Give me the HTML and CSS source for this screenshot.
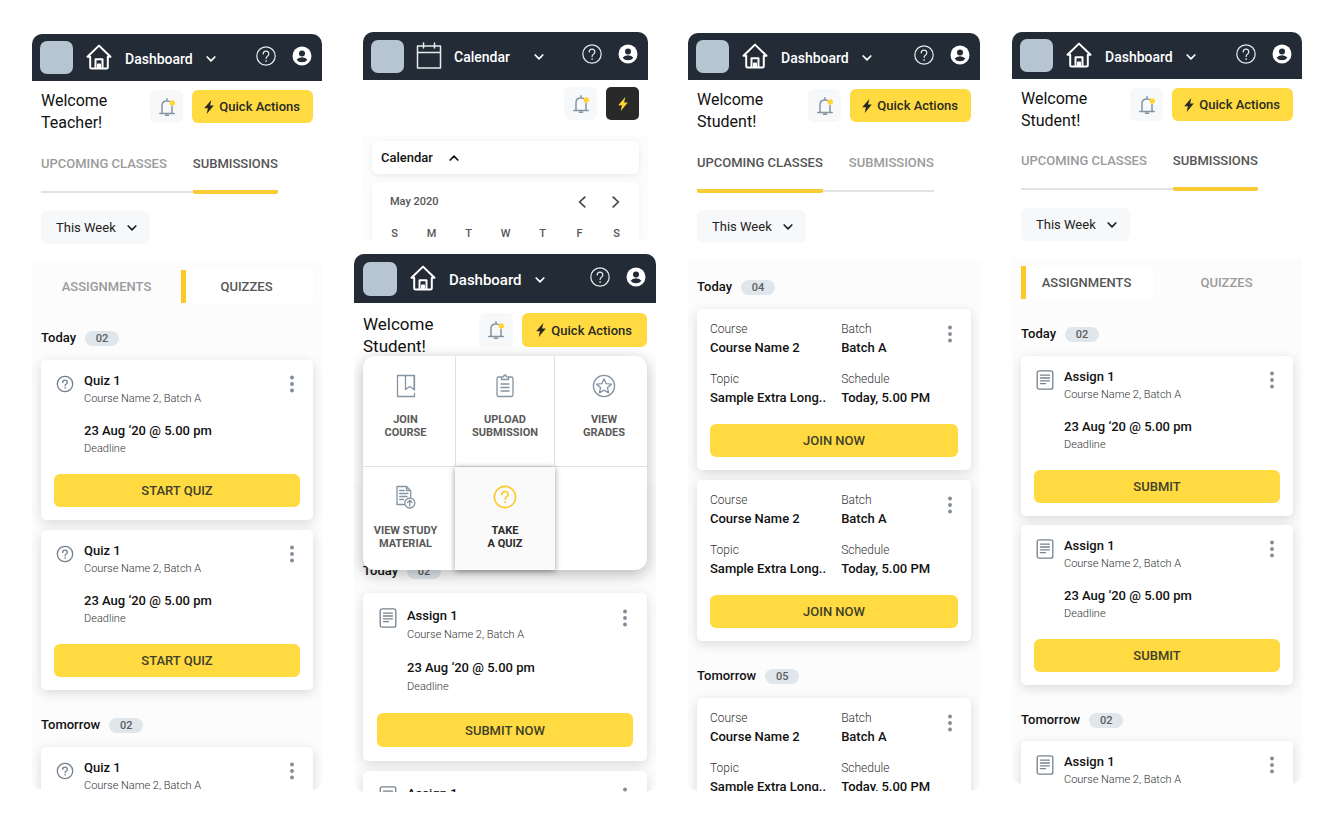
FILE: index.html
```html
<!DOCTYPE html>
<html lang="en">
<head>
<meta charset="utf-8">
<meta name="viewport" content="width=device-width, initial-scale=1">
<title>Classroom dashboard</title>
<link rel="stylesheet" href="styles.css">
</head>
<body>
<svg class="sprite" aria-hidden="true">
  <symbol id="home" viewBox="0 0 26 26"><path d="M1.500 12.800 13 1.600l11.500 11.200h-2.700V23q0 1.500-1.500 1.500H5.700q-1.500 0-1.500-1.500V12.800z M9.500 24.300v-9h7v9M12 24v-3.500h2V24"/></symbol>
  <symbol id="cal" viewBox="0 0 26 28"><path d="M1.500 4h23v22h-23zM1.500 10.500h23M7.500 1v5M18.500 1v5"/></symbol>
  <symbol id="help" viewBox="0 0 20 20"><circle cx="10" cy="10" r="9.200"/><path d="M7.200 8q0-2.900 2.800-2.900T12.800 8q0 1.300-1.400 2.200-1.300.8-1.300 2.200M10.100 14.600v.8"/></symbol>
  <symbol id="user" viewBox="0 0 20 20"><circle cx="10" cy="10" r="9.500" fill="#fff"/><circle cx="10" cy="7.400" r="3" fill="#222b36"/><path d="M4.600 13.700q1.600-2.500 5.400-2.500t5.400 2.500q-1.900 2.600-5.400 2.600t-5.400-2.600z" fill="#222b36"/></symbol>
  <symbol id="down" viewBox="0 0 10 10"><path d="m1.200 3 3.800 3.800L8.800 3"/></symbol>
  <symbol id="up" viewBox="0 0 10 10"><path d="m1.200 7 3.800-3.800L8.800 7"/></symbol>
  <symbol id="bell" viewBox="0 0 16 18"><path d="M.8 15.600h14.400M3 15.600V7.500Q3 3 8 3q1.300 0 2.300.4M13 8.500v7.100M8 3V.8M6.500 17.300h3" fill="none" stroke="#8594a1" stroke-width="1.500"/><circle cx="13.300" cy="5" r="2.700" fill="#ffd631"/></symbol>
  <symbol id="bolt" viewBox="0 0 10 14"><path d="M7.300 0 .2 8.200h3.700L2.700 14l7.100-8.600H6.100z" fill="currentColor"/></symbol>
  <symbol id="dots" viewBox="0 0 16 18"><g fill="#7f8b96"><circle cx="8" cy="2.500" r="1.900"/><circle cx="8" cy="9" r="1.900"/><circle cx="8" cy="15.500" r="1.900"/></g></symbol>
  <symbol id="quiz" viewBox="0 0 18 20"><circle cx="9" cy="10" r="7.700"/><path d="M6.700 8.400q0-2.200 2.300-2.200t2.300 2.200q0 .9-1.100 1.600-1.100.6-1.100 1.600M9.100 13.500v.6"/></symbol>
  <symbol id="sheet" viewBox="0 0 18 20"><rect x="1.200" y=".8" width="15.600" height="18.400" rx="2"/><path d="M4.500 5.200h9M4.500 8h9M4.500 10.800h9M4.500 13.600h5"/></symbol>
  <symbol id="book" viewBox="0 0 24 24"><path d="M20.500 16V1.500h-17v21h17v-3.200M11.500 1.500v14l4.300-3 4.300 3v-14"/></symbol>
  <symbol id="clip" viewBox="0 0 24 24"><path d="M8.500 3H5.800Q4 3 4 4.800v15.900q0 1.800 1.800 1.800h12.400q1.800 0 1.800-1.800V4.800Q20 3 18.200 3h-2.700M8.500 5.500V2.800h2.200Q10.700 1 12 1t1.300 1.800h2.200v2.700zM8 10h8M8 13.500h8M8 17h8"/></symbol>
  <symbol id="star" viewBox="0 0 24 24"><circle cx="12" cy="12" r="10.600"/><path d="m12 4.800 2.100 4.900 5.300.5-4 3.500 1.200 5.200-4.600-2.800-4.600 2.800 1.200-5.200-4-3.500 5.300-.5z"/></symbol>
  <symbol id="material" viewBox="0 0 24 24"><path d="M10.500 19.500H3V1.500h9.500l4.200 4.200V12M12.500 1.500v4.200h4.200M5.700 8.500H14M5.700 5.500h4.500M5.700 11.500H13M5.700 14.500H9.500"/><circle cx="15.800" cy="18" r="5"/><path d="M15.800 21v-5.600M13.600 17.500l2.200-2.200 2.200 2.200"/></symbol>
  <symbol id="quizbig" viewBox="0 0 24 24"><circle cx="12" cy="12" r="10.600"/><path d="M8.900 9.700q0-3.200 3.100-3.200t3.100 3.200q0 1.400-1.600 2.300-1.400.8-1.400 2.300M12.100 16.700v.9"/></symbol>
  <symbol id="prev" viewBox="0 0 10 12"><path d="M7.800 1.200 2.600 6l5.200 4.800"/></symbol>
  <symbol id="next" viewBox="0 0 10 12"><path d="M2.200 1.200 7.400 6l-5.200 4.800"/></symbol>
</svg>

<main class="board">

  <section class="phone teacher">
    <header class="nav">
      <span class="logo"></span>
      <button class="place"><svg class="home"><use href="#home"/></svg><span>Dashboard</span><svg class="chev"><use href="#down"/></svg></button>
      <div class="account">
        <button aria-label="Help"><svg class="round"><use href="#help"/></svg></button>
        <button aria-label="Account"><svg class="round"><use href="#user"/></svg></button>
      </div>
    </header>
    <div class="hero">
      <h1>Welcome Teacher!</h1>
      <button class="bell" aria-label="Notifications"><svg><use href="#bell"/></svg></button>
      <button class="quick"><svg class="bolt"><use href="#bolt"/></svg>Quick Actions</button>
    </div>
    <nav class="tabs"><a href="#upcoming">UPCOMING CLASSES</a><a class="on" href="#submissions">SUBMISSIONS</a></nav>
    <div class="period"><select aria-label="Period"><option>This Week</option></select><svg class="chev"><use href="#down"/></svg></div>
    <div class="feed">
      <nav class="kinds"><a href="#assignments">ASSIGNMENTS</a><a class="on" href="#quizzes">QUIZZES</a></nav>
      <h2>Today <span class="count">02</span></h2>
      <article class="card">
        <div class="task"><svg class="kind"><use href="#quiz"/></svg>
          <div class="info"><h3>Quiz 1</h3><p>Course Name 2, Batch A</p><h3 class="due">23 Aug ‘20 @ 5.00 pm</h3><p>Deadline</p></div>
          <button class="more" aria-label="More"><svg><use href="#dots"/></svg></button></div>
        <button class="main">START QUIZ</button>
      </article>
      <article class="card">
        <div class="task"><svg class="kind"><use href="#quiz"/></svg>
          <div class="info"><h3>Quiz 1</h3><p>Course Name 2, Batch A</p><h3 class="due">23 Aug ‘20 @ 5.00 pm</h3><p>Deadline</p></div>
          <button class="more" aria-label="More"><svg><use href="#dots"/></svg></button></div>
        <button class="main">START QUIZ</button>
      </article>
      <h2>Tomorrow <span class="count">02</span></h2>
      <article class="card">
        <div class="task"><svg class="kind"><use href="#quiz"/></svg>
          <div class="info"><h3>Quiz 1</h3><p>Course Name 2, Batch A</p></div>
          <button class="more" aria-label="More"><svg><use href="#dots"/></svg></button></div>
      </article>
    </div>
  </section>

  <div class="stack">
    <section class="phone small">
      <header class="nav">
        <span class="logo"></span>
        <button class="place"><svg class="cal"><use href="#cal"/></svg><span>Calendar</span><svg class="chev"><use href="#down"/></svg></button>
        <div class="account">
          <button aria-label="Help"><svg class="round"><use href="#help"/></svg></button>
          <button aria-label="Account"><svg class="round"><use href="#user"/></svg></button>
        </div>
      </header>
      <div class="hero">
        <button class="bell" aria-label="Notifications"><svg><use href="#bell"/></svg></button>
        <button class="flash" aria-label="Quick Actions"><svg class="bolt"><use href="#bolt"/></svg></button>
      </div>
      <div class="feed">
        <button class="fold">Calendar<svg class="chev"><use href="#up"/></svg></button>
        <div class="month">
          <div class="monthbar"><span>May 2020</span><button aria-label="Previous month"><svg><use href="#prev"/></svg></button><button aria-label="Next month"><svg><use href="#next"/></svg></button></div>
          <table><thead><tr><th>S</th><th>M</th><th>T</th><th>W</th><th>T</th><th>F</th><th>S</th></tr></thead></table>
        </div>
      </div>
    </section>

    <section class="phone large">
      <header class="nav">
        <span class="logo"></span>
        <button class="place"><svg class="home"><use href="#home"/></svg><span>Dashboard</span><svg class="chev"><use href="#down"/></svg></button>
        <div class="account">
          <button aria-label="Help"><svg class="round"><use href="#help"/></svg></button>
          <button aria-label="Account"><svg class="round"><use href="#user"/></svg></button>
        </div>
      </header>
      <div class="hero">
        <h1>Welcome Student!</h1>
        <button class="bell" aria-label="Notifications"><svg><use href="#bell"/></svg></button>
        <button class="quick"><svg class="bolt"><use href="#bolt"/></svg>Quick Actions</button>
        <div class="menu">
          <button><svg><use href="#book"/></svg><span>JOIN<br>COURSE</span></button>
          <button><svg><use href="#clip"/></svg><span>UPLOAD<br>SUBMISSION</span></button>
          <button><svg><use href="#star"/></svg><span>VIEW<br>GRADES</span></button>
          <button><svg><use href="#material"/></svg><span>VIEW STUDY<br>MATERIAL</span></button>
          <button class="on"><svg><use href="#quizbig"/></svg><span>TAKE<br>A QUIZ</span></button>
        </div>
      </div>
      <div class="feed">
        <h2>Today <span class="count">02</span></h2>
        <article class="card">
          <div class="task"><svg class="kind"><use href="#sheet"/></svg>
            <div class="info"><h3>Assign 1</h3><p>Course Name 2, Batch A</p><h3 class="due">23 Aug ‘20 @ 5.00 pm</h3><p>Deadline</p></div>
            <button class="more" aria-label="More"><svg><use href="#dots"/></svg></button></div>
          <button class="main">SUBMIT NOW</button>
        </article>
        <article class="card">
          <div class="task"><svg class="kind"><use href="#sheet"/></svg>
            <div class="info"><h3>Assign 1</h3></div>
            <button class="more" aria-label="More"><svg><use href="#dots"/></svg></button></div>
        </article>
      </div>
    </section>
  </div>

  <section class="phone classes">
    <header class="nav">
      <span class="logo"></span>
      <button class="place"><svg class="home"><use href="#home"/></svg><span>Dashboard</span><svg class="chev"><use href="#down"/></svg></button>
      <div class="account">
        <button aria-label="Help"><svg class="round"><use href="#help"/></svg></button>
        <button aria-label="Account"><svg class="round"><use href="#user"/></svg></button>
      </div>
    </header>
    <div class="hero">
      <h1>Welcome Student!</h1>
      <button class="bell" aria-label="Notifications"><svg><use href="#bell"/></svg></button>
      <button class="quick"><svg class="bolt"><use href="#bolt"/></svg>Quick Actions</button>
    </div>
    <nav class="tabs"><a class="on" href="#upcoming">UPCOMING CLASSES</a><a href="#submissions">SUBMISSIONS</a></nav>
    <div class="period"><select aria-label="Period"><option>This Week</option></select><svg class="chev"><use href="#down"/></svg></div>
    <div class="feed">
      <h2>Today <span class="count">04</span></h2>
      <article class="card">
        <dl class="facts">
          <div><dt>Course</dt><dd>Course Name 2</dd></div><div><dt>Batch</dt><dd>Batch A</dd></div>
          <button class="more" aria-label="More"><svg><use href="#dots"/></svg></button>
          <div><dt>Topic</dt><dd>Sample Extra Long..</dd></div><div><dt>Schedule</dt><dd>Today, 5.00 PM</dd></div>
        </dl>
        <button class="main">JOIN NOW</button>
      </article>
      <article class="card">
        <dl class="facts">
          <div><dt>Course</dt><dd>Course Name 2</dd></div><div><dt>Batch</dt><dd>Batch A</dd></div>
          <button class="more" aria-label="More"><svg><use href="#dots"/></svg></button>
          <div><dt>Topic</dt><dd>Sample Extra Long..</dd></div><div><dt>Schedule</dt><dd>Today, 5.00 PM</dd></div>
        </dl>
        <button class="main">JOIN NOW</button>
      </article>
      <h2>Tomorrow <span class="count">05</span></h2>
      <article class="card">
        <dl class="facts">
          <div><dt>Course</dt><dd>Course Name 2</dd></div><div><dt>Batch</dt><dd>Batch A</dd></div>
          <button class="more" aria-label="More"><svg><use href="#dots"/></svg></button>
          <div><dt>Topic</dt><dd>Sample Extra Long..</dd></div><div><dt>Schedule</dt><dd>Today, 5.00 PM</dd></div>
        </dl>
      </article>
    </div>
  </section>

  <section class="phone student">
    <header class="nav">
      <span class="logo"></span>
      <button class="place"><svg class="home"><use href="#home"/></svg><span>Dashboard</span><svg class="chev"><use href="#down"/></svg></button>
      <div class="account">
        <button aria-label="Help"><svg class="round"><use href="#help"/></svg></button>
        <button aria-label="Account"><svg class="round"><use href="#user"/></svg></button>
      </div>
    </header>
    <div class="hero">
      <h1>Welcome Student!</h1>
      <button class="bell" aria-label="Notifications"><svg><use href="#bell"/></svg></button>
      <button class="quick"><svg class="bolt"><use href="#bolt"/></svg>Quick Actions</button>
    </div>
    <nav class="tabs"><a href="#upcoming">UPCOMING CLASSES</a><a class="on" href="#submissions">SUBMISSIONS</a></nav>
    <div class="period"><select aria-label="Period"><option>This Week</option></select><svg class="chev"><use href="#down"/></svg></div>
    <div class="feed">
      <nav class="kinds"><a class="on" href="#assignments">ASSIGNMENTS</a><a href="#quizzes">QUIZZES</a></nav>
      <h2>Today <span class="count">02</span></h2>
      <article class="card">
        <div class="task"><svg class="kind"><use href="#sheet"/></svg>
          <div class="info"><h3>Assign 1</h3><p>Course Name 2, Batch A</p><h3 class="due">23 Aug ‘20 @ 5.00 pm</h3><p>Deadline</p></div>
          <button class="more" aria-label="More"><svg><use href="#dots"/></svg></button></div>
        <button class="main">SUBMIT</button>
      </article>
      <article class="card">
        <div class="task"><svg class="kind"><use href="#sheet"/></svg>
          <div class="info"><h3>Assign 1</h3><p>Course Name 2, Batch A</p><h3 class="due">23 Aug ‘20 @ 5.00 pm</h3><p>Deadline</p></div>
          <button class="more" aria-label="More"><svg><use href="#dots"/></svg></button></div>
        <button class="main">SUBMIT</button>
      </article>
      <h2>Tomorrow <span class="count">02</span></h2>
      <article class="card">
        <div class="task"><svg class="kind"><use href="#sheet"/></svg>
          <div class="info"><h3>Assign 1</h3><p>Course Name 2, Batch A</p></div>
          <button class="more" aria-label="More"><svg><use href="#dots"/></svg></button></div>
      </article>
    </div>
  </section>

</main>
</body>
</html>
```
FILE: styles.css
```css
* { box-sizing: border-box; }
body { margin: 0; background: #fff; color: #111; font-family: Roboto, "Liberation Sans", sans-serif; font-size: 13px; }
h1, h2, h3, p, dl, dd { margin: 0; }
a { color: inherit; text-decoration: none; }
button { border: 0; padding: 0; background: none; color: inherit; font: inherit; cursor: pointer; }
svg { display: block; flex: none; fill: none; stroke-linecap: round; stroke-linejoin: round; }
.sprite { position: absolute; width: 0; height: 0; }

.board {
  display: grid;
  grid-template-columns: 290fr 302fr 292fr 290fr;
  gap: 32px;
  height: 100vh;
  padding: 32px 38px 28px 32px;
}
.phone {
  --nav: 47px;
  --control: 33px;
  --line: 18px;
  --edge: 9px;
  display: flex;
  flex-direction: column;
  min-width: 0;
  overflow: hidden;
  border-radius: 10px;
}
.teacher { margin: 2px 0; }
.classes { margin: 1px 0; }
.student { margin-bottom: 8px; }
.stack { display: flex; flex-direction: column; gap: 12px; min-width: 0; min-height: 0; }
.small { --nav: 48px; flex: none; margin: 0 8px 0 9px; }
.large { --nav: 49px; --control: 34px; --line: 19px; flex: 1; min-height: 0; }

.nav { display: flex; flex: none; align-items: center; height: var(--nav); padding: 0 10px 0 8px; background: #222b36; color: #fff; }
.logo { width: var(--control); height: var(--control); border-radius: 7px; background: #b6c5d1; }
.place { display: flex; align-items: center; gap: 13px; margin-left: 13px; padding-top: 2px; font-size: 14px; font-weight: 500; line-height: 18px; }
.place .home, .place .cal { margin-bottom: 3px; }
.home { width: 26px; height: 26px; stroke: #fff; stroke-width: 2; }
.cal { width: 26px; height: 28px; stroke: #e8ecef; stroke-width: 1.500; }
.chev { width: 10px; height: 10px; stroke: currentColor; stroke-width: 1.700; }
.account { display: flex; gap: 16px; margin-left: auto; padding-bottom: 3px; }
.round { width: 20px; height: 20px; stroke-width: 1.200; }
.account button:first-child .round { stroke: #e8ecef; }
.small .place { gap: 12px; margin-left: 12px; }
.small .place .chev { margin-left: 12px; }
.small .account { padding-bottom: 5px; }
.large .nav { padding-left: 9px; }
.large .place { font-size: 15px; }

.hero { position: relative; display: flex; flex: none; align-items: flex-start; padding: 9px var(--edge) 0; }
.hero h1 { flex: 1; max-width: 90px; margin-right: auto; font-size: 16px; font-weight: 400; line-height: 22px; }
.bell { display: grid; place-items: center; width: var(--control); height: var(--control); border-radius: 6px; background: #f7f8f9; }
.bell svg { width: 16px; height: 18px; }
.quick { display: flex; align-items: center; gap: 5px; height: var(--control); margin-left: 9px; padding: 0 13px 0 12px; border-radius: 6px; background: #ffdb41; color: #2a2a22; font-weight: 500; }
.bolt { width: 10px; height: 14px; }
.flash { display: grid; place-items: center; width: 33px; height: 33px; margin-left: 9px; border-radius: 5px; background: #292929; color: #ffd631; }
.small .hero { justify-content: flex-end; padding: 7px 9px 15px; }
.large .hero { padding-top: 10px; }
.large .hero h1 { font-size: 17px; }
.large .quick { padding: 0 15px 0 14px; }

.tabs { display: flex; flex: none; width: fit-content; margin: 22px var(--edge) 0; background: linear-gradient(#e2e2e2, #e2e2e2) 0 calc(100% - 1px) / 100% 2px no-repeat; color: #9b9b9b; font-weight: 500; line-height: 16px; }
.tabs a { padding-bottom: 22px; }
.tabs a + a { margin-left: 26px; }
.tabs .on { padding-bottom: 18px; border-bottom: 4px solid #f9cb35; border-radius: 2px; color: #555; }
.period { display: grid; flex: none; align-items: center; width: fit-content; margin: 17px var(--edge) 18px; border-radius: 6px; background: #f7f8fa; }
.period select, .period .chev { grid-area: 1 / 1; }
.period select { appearance: none; height: 33px; border: 0; padding: 0 34px 0 15px; background: none; color: #222; font: inherit; }
.period .chev { justify-self: end; margin-right: 13px; stroke: #222; pointer-events: none; }
.student .tabs { margin-top: 21px; }
.student .period { margin-bottom: 17px; }

.feed { flex: 1; min-height: 0; padding: 8px var(--edge) 0; background: #fcfcfc; }
.kinds { display: grid; grid-template-columns: 1fr 1fr; gap: 8px; height: 33px; margin-bottom: 27px; color: #9b9b9b; font-weight: 500; text-align: center; line-height: 33px; }
.kinds a { border-left: 5px solid transparent; padding-right: 6px; }
.kinds .on { border-color: #fbc92c; background: #fff; color: #555; }
.feed h2 { display: flex; align-items: center; gap: 9px; font-size: 13px; font-weight: 500; line-height: 16px; }
.card + h2 { margin-top: 27px; }
.count { width: 34px; border-radius: 8px; background: #dfe6ec; color: #5c5c5c; font-size: 11px; line-height: 15px; text-align: center; }
.classes .feed { padding-top: 18px; }
.large .feed { margin-top: 128px; padding-top: 78px; }

.card { padding: 12px 13px 13px; border-radius: 5px; background: #fff; box-shadow: 0 3px 12px rgba(0, 0, 0, .14); }
.card + .card { margin-top: 10px; }
h2 + .card { margin-top: 14px; }
.student .card + .card { margin-top: 9px; }
.student .card + h2 + .card { margin-top: 13px; }
.task { display: flex; align-items: flex-start; }
.kind { width: 18px; height: 20px; margin: 2px 10px 0 2px; stroke: #74818d; stroke-width: 1.300; }
.info { flex: 1; min-width: 0; }
.info h3, .facts dd { color: #111; font-size: 13px; font-weight: 500; line-height: var(--line); white-space: nowrap; }
.info p, .facts dt { color: #333; font-size: 11px; font-weight: 300; line-height: var(--line); }
.info .due { margin-top: 14px; }
.more svg { width: 16px; height: 18px; }
.more { margin-top: 3px; }
.main { display: block; width: 100%; height: var(--control); margin-top: 16px; border-radius: 6px; background: #ffdb41; color: #41402a; font-weight: 500; }
.large .card { padding: 13px 14px 14px; }
.large .main { margin-top: 17px; }
.facts { display: grid; grid-template-columns: 130fr 100fr 16px; row-gap: 12px; align-items: start; }
.facts .more { margin-top: 5px; }
.facts dt { font-size: 12px; }
.facts dd { line-height: 20px; }
.classes .card { padding: 11px 13px 13px; }

.menu {
  position: absolute;
  z-index: 1;
  top: 53px;
  left: 9px;
  right: 9px;
  display: grid;
  grid-template-columns: 92fr 100fr 92fr;
  grid-template-rows: 111px 103px;
  border-radius: 12px;
  background: #fff;
  box-shadow: 0 4px 16px rgba(0, 0, 0, .28);
}
.menu button { display: flex; flex-direction: column; align-items: center; gap: 15px; padding: 18px 0 0; color: #5a5a5a; font-size: 11px; font-weight: 700; line-height: 13px; }
.menu svg { width: 24px; height: 24px; stroke: #8594a1; stroke-width: 1.300; }
.menu button:nth-child(-n+3) { border-bottom: 1px solid #dce2e6; }
.menu button:nth-child(3n+1) { padding-right: 7px; }
.menu button:nth-child(2) { border-left: 1px solid #dce2e6; border-right: 1px solid #dce2e6; }
.menu button:nth-child(3) { padding-left: 6px; }
.menu .on { background: #fafafa; box-shadow: 0 1px 6px rgba(0, 0, 0, .4); color: #2b2b2b; }
.menu .on svg { stroke: #fbc92c; stroke-width: 1.600; }

.small .feed { padding: 6px 9px 0; }
.fold { display: flex; align-items: center; gap: 16px; width: 100%; height: 33px; padding: 0 9px; border-radius: 6px; background: #fff; box-shadow: 0 2px 6px rgba(0, 0, 0, .07); font-weight: 500; }
.month { margin-top: 8px; padding: 11px 4px 0; border-radius: 6px 6px 0 0; background: #fff; box-shadow: 0 2px 6px rgba(0, 0, 0, .05); color: #555; font-size: 11px; font-weight: 500; }
.monthbar { display: flex; align-items: center; gap: 24px; padding: 0 14px; line-height: 18px; }
.monthbar span { flex: 1; }
.monthbar svg { width: 10px; height: 12px; stroke: #444; stroke-width: 1.700; }
.month table { width: 100%; margin-top: 15px; border-collapse: collapse; table-layout: fixed; }
.month th { padding: 0; font-weight: 500; line-height: 16px; }
```
